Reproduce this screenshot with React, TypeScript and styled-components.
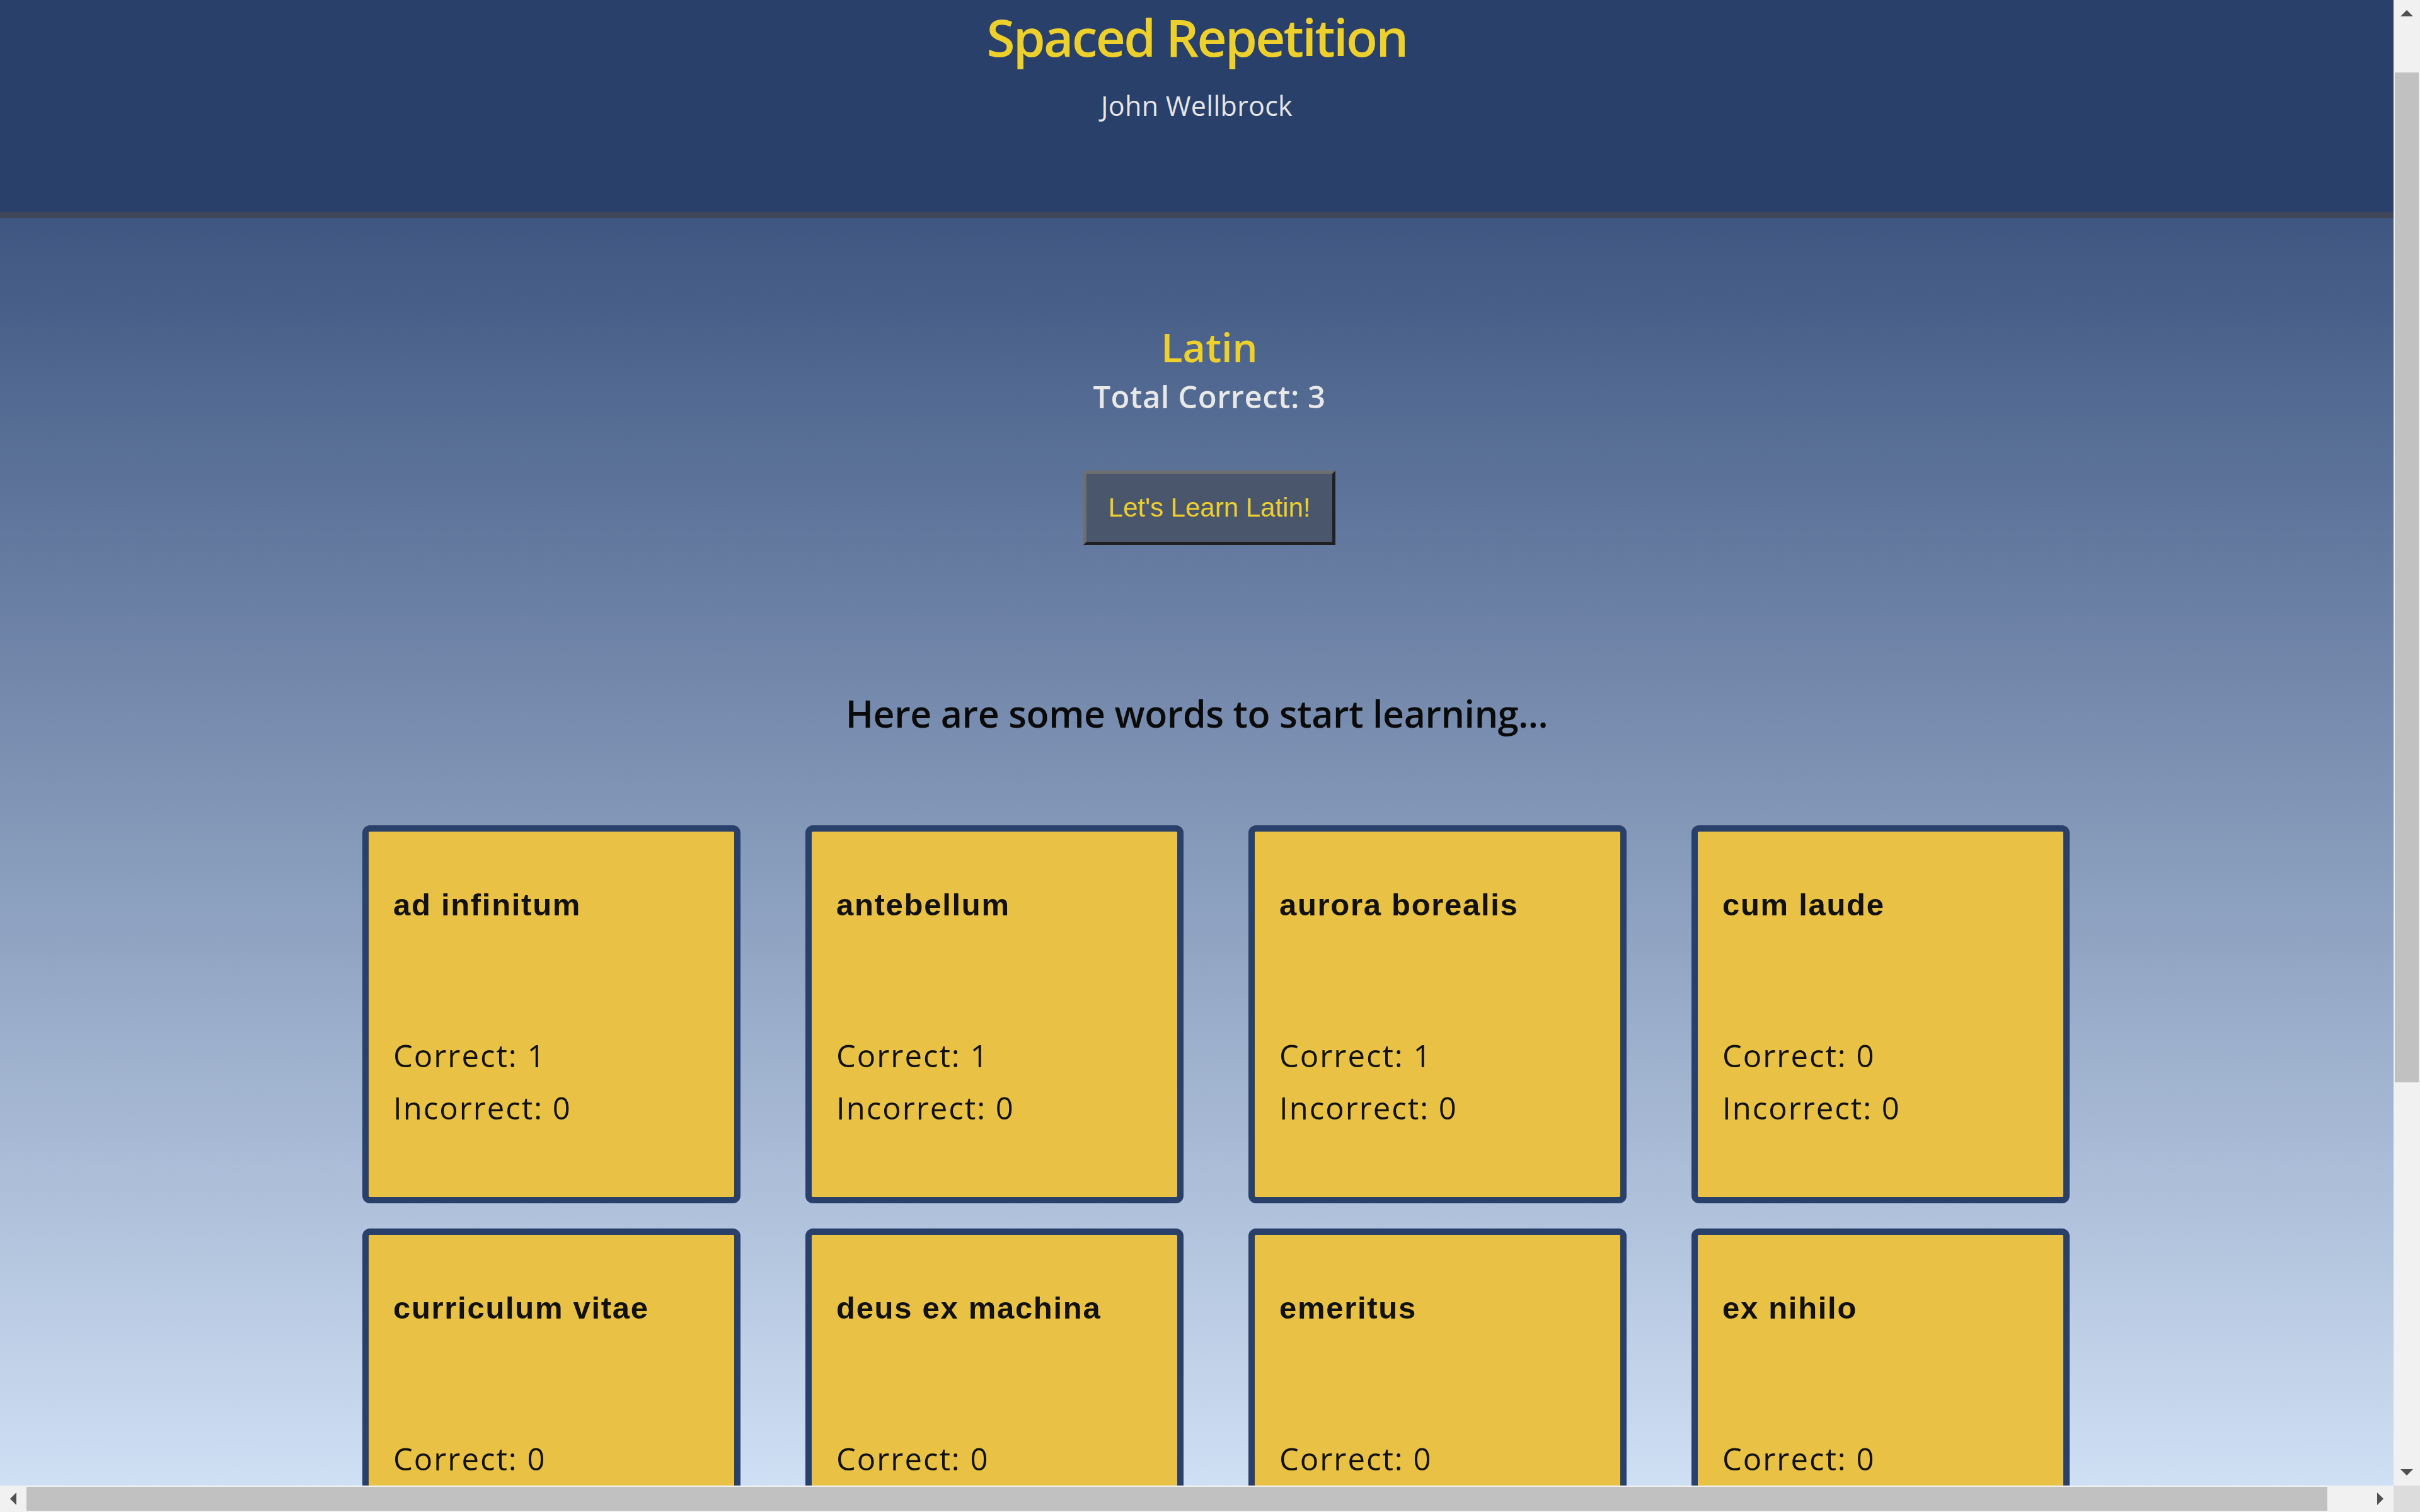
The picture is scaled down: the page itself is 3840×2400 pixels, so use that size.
import styled, { createGlobalStyle } from "styled-components";

const GlobalStyle = createGlobalStyle`
  html, body {
    margin: 0;
    padding: 0;
    overflow: hidden;
  }
  #root {
    width: 100vw;
    height: 100vh;
  }
`;

const Shell = styled.div`
  width: 100%;
  height: 100%;
  display: grid;
  grid-template-columns: 1fr 42px;
  grid-template-rows: 1fr 42px;
  background: #f1f1f1;
`;

const Viewport = styled.div`
  overflow: hidden;
  min-width: 0;
  min-height: 0;
  display: flex;
  flex-direction: column;
`;

const Header = styled.header`
  flex: 0 0 auto;
  box-sizing: border-box;
  height: 346px;
  padding-top: 8px;
  background: #28406a;
  border-bottom: 9px solid #3e4658;
  text-align: center;
`;

const Title = styled.h1`
  margin: 0;
  color: #eed02c;
  font-family: "Open Sans", sans-serif;
  font-weight: 600;
  font-size: 82px;
  line-height: 100px;
  letter-spacing: -2.8px;
`;

const UserName = styled.div`
  margin-top: 35px;
  color: #e6e6e6;
  font-family: "Open Sans", sans-serif;
  font-size: 43px;
  line-height: 50px;
  letter-spacing: 0.3px;
`;

const Main = styled.main`
  flex: 1 0 0;
  min-height: 0;
  background: linear-gradient(to bottom, #3e5681 0%, #cfdff4 100%);
  padding-top: 170px;
`;

const LanguageBlock = styled.section`
  padding-left: 40px;
  text-align: center;
  font-family: "Open Sans", sans-serif;
`;

const Language = styled.h2`
  margin: 0;
  color: #eed02c;
  font-weight: 600;
  font-size: 63px;
  line-height: 70px;
`;

const Total = styled.div`
  margin-top: 15px;
  color: #e8e8e8;
  font-weight: 600;
  font-size: 49px;
  line-height: 56px;
  letter-spacing: 0.5px;
`;

const LearnButton = styled.button`
  display: block;
  box-sizing: border-box;
  width: 400px;
  height: 118px;
  margin: 90px auto 0;
  padding: 0;
  background: #4a566b;
  color: #eccf2d;
  border: 5px solid;
  border-color: #6e6e6e #202020 #202020 #6e6e6e;
  font-family: "Liberation Sans", Arial, sans-serif;
  font-size: 42px;
  cursor: pointer;
`;

const Intro = styled.h3`
  margin: 232px 0 0;
  text-align: center;
  color: #0a0a0a;
  font-family: "Open Sans", sans-serif;
  font-weight: 600;
  font-size: 59px;
  line-height: 70px;
  letter-spacing: -0.4px;
`;

const CardGrid = styled.div`
  margin-top: 143px;
  padding-left: 61px;
  display: grid;
  grid-template-columns: repeat(4, 600px);
  column-gap: 103px;
  row-gap: 40px;
  justify-content: center;
`;

const Card = styled.div`
  box-sizing: border-box;
  width: 600px;
  height: 600px;
  border: 10px solid #28406a;
  border-radius: 12px;
  background: #e8c145;
  padding: 88px 39px 0;
`;

const Word = styled.h4`
  margin: 0;
  color: #111;
  font-family: "Liberation Sans", Arial, sans-serif;
  font-weight: 700;
  font-size: 49px;
  line-height: 56px;
  letter-spacing: 1.7px;
`;

const Stats = styled.div`
  margin-top: 170px;
`;

const Stat = styled.p`
  margin: 0;
  color: #111;
  font-family: "Open Sans", sans-serif;
  font-size: 49px;
  line-height: 83px;
  letter-spacing: 2px;
`;

const VBar = styled.div`
  display: flex;
  flex-direction: column;
  background: #f1f1f1;
`;

const HBar = styled.div`
  display: flex;
  background: #f1f1f1;
`;

const Corner = styled.div`
  background: #dcdcdc;
`;

const Arrow = styled.div`
  flex: 0 0 42px;
  display: flex;
  align-items: center;
  justify-content: center;
`;

const VTrack = styled.div`
  flex: 1;
  padding: 73px 2px 0;
`;

const VThumb = styled.div`
  height: 1603px;
  background: #c1c1c1;
`;

const HTrack = styled.div`
  flex: 1;
  padding: 2px 0;
`;

const HThumb = styled.div`
  width: 3651px;
  height: 100%;
  background: #c1c1c1;
`;

type Dir = "up" | "down" | "left" | "right";

const Triangle = ({ dir }: { dir: Dir }) => {
  const pts: Record<Dir, string> = {
    up: "0,10 10,0 20,10",
    down: "0,0 20,0 10,10",
    left: "10,0 10,20 0,10",
    right: "0,0 0,20 10,10",
  };
  const vertical = dir === "up" || dir === "down";
  return (
    <svg width={vertical ? 20 : 10} height={vertical ? 10 : 20} viewBox={vertical ? "0 0 20 10" : "0 0 10 20"}>
      <polygon points={pts[dir]} fill="#505050" />
    </svg>
  );
};

const words = [
  { word: "ad infinitum", correct: 1, incorrect: 0 },
  { word: "antebellum", correct: 1, incorrect: 0 },
  { word: "aurora borealis", correct: 1, incorrect: 0 },
  { word: "cum laude", correct: 0, incorrect: 0 },
  { word: "curriculum vitae", correct: 0, incorrect: 0 },
  { word: "deus ex machina", correct: 0, incorrect: 0 },
  { word: "emeritus", correct: 0, incorrect: 0 },
  { word: "ex nihilo", correct: 0, incorrect: 0 },
];

const App = () => {
  return (
    <>
      <GlobalStyle />
      <Shell>
        <Viewport>
          <Header>
            <Title>Spaced Repetition</Title>
            <UserName>John Wellbrock</UserName>
          </Header>
          <Main>
            <LanguageBlock>
              <Language>Latin</Language>
              <Total>Total Correct: 3</Total>
              <LearnButton type="button">Let's Learn Latin!</LearnButton>
            </LanguageBlock>
            <Intro>Here are some words to start learning...</Intro>
            <CardGrid>
              {words.map((w) => (
                <Card key={w.word}>
                  <Word>{w.word}</Word>
                  <Stats>
                    <Stat>Correct: {w.correct}</Stat>
                    <Stat>Incorrect: {w.incorrect}</Stat>
                  </Stats>
                </Card>
              ))}
            </CardGrid>
          </Main>
        </Viewport>
        <VBar>
          <Arrow>
            <Triangle dir="up" />
          </Arrow>
          <VTrack>
            <VThumb />
          </VTrack>
          <Arrow>
            <Triangle dir="down" />
          </Arrow>
        </VBar>
        <HBar>
          <Arrow>
            <Triangle dir="left" />
          </Arrow>
          <HTrack>
            <HThumb />
          </HTrack>
          <Arrow>
            <Triangle dir="right" />
          </Arrow>
        </HBar>
        <Corner />
      </Shell>
    </>
  );
};

export default App;
